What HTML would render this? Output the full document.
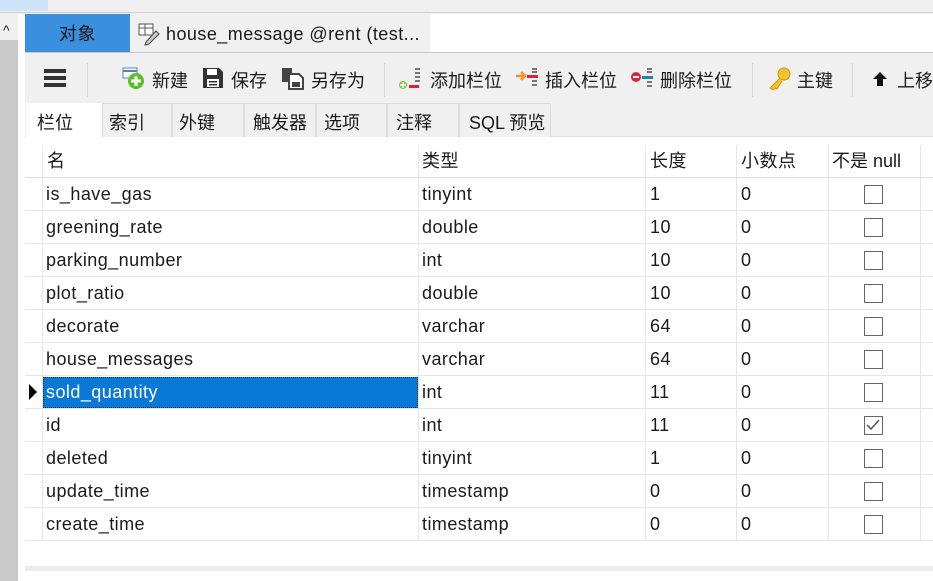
<!DOCTYPE html>
<html><head><meta charset="utf-8"><style>
*{margin:0;padding:0;box-sizing:border-box}
body{width:933px;height:581px;overflow:hidden;background:#f0f0f0;font-family:"Liberation Sans","Noto Sans CJK SC",sans-serif;font-size:18px;color:#1a1a1a;position:relative}
.a{position:absolute}
.t{position:absolute;white-space:nowrap;line-height:20px;letter-spacing:0.45px}
.tb{position:absolute;white-space:nowrap;line-height:20px;top:71px}
.cb{position:absolute;width:19px;height:19px;border:1.5px solid #666;background:#fff}
.vl{position:absolute;width:1px;background:#e6e6e6}
.hl{position:absolute;height:1px;background:#e6e6e6;left:25px;width:908px}
.st{position:absolute;top:103px;height:34px;border:1px solid #dcdcdc;border-bottom:none;background:#f0f0f0;padding:5px 0 0 6px}
</style></head><body>
<div class="a" style="left:0;top:0;width:933px;height:13px;background:#f0f0f0;border-bottom:1px solid #d0d0d0"></div>
<div class="a" style="left:0;top:0;width:48px;height:11px;background:#cde3f7"></div>
<div class="a" style="left:0;top:14px;width:18px;height:567px;background:#c9c9c9"></div>
<div class="a" style="left:0;top:14px;width:18px;height:26px;background:#f0f0f0"></div>
<div class="t" style="left:3px;top:20px;font-size:14px">^</div>
<div class="a" style="left:18px;top:14px;width:7px;height:567px;background:#fff"></div>
<div class="a" style="left:25px;top:14px;width:908px;height:39px;background:#f0f0f0"></div>
<div class="a" style="left:25px;top:14px;width:105px;height:38px;background:#3a8fde"></div>
<div class="t" style="left:59px;top:24px">对象</div>
<div class="a" style="left:430px;top:14px;width:503px;height:38px;background:#fff"></div>
<div class="a" style="left:25px;top:52px;width:908px;height:1px;background:#c8c8c8"></div>
<svg class="a" style="left:138px;top:22px" width="24" height="24" viewBox="0 0 24 24"><rect x="1" y="2" width="14" height="11" fill="#fff" stroke="#555"/><line x1="1" y1="6" x2="15" y2="6" stroke="#555"/><line x1="7" y1="2" x2="7" y2="13" stroke="#555"/><path d="M8 20 L18 9 L21 12 L11 22 L7 23 Z" fill="#ccc" stroke="#444"/></svg>
<div class="t" style="left:166px;top:24px">house_message @rent (test...</div>
<div class="a" style="left:44px;top:69px;width:22px;height:4px;background:#333"></div>
<div class="a" style="left:44px;top:76px;width:22px;height:4px;background:#333"></div>
<div class="a" style="left:44px;top:83px;width:22px;height:4px;background:#333"></div>
<div class="a" style="left:87px;top:63px;width:1px;height:34px;background:#d8d8d8"></div>
<svg class="a" style="left:122px;top:67px" width="26" height="24"><rect x="1" y="1" width="14" height="10" fill="#fff" stroke="#5a7fb0"/><line x1="1" y1="4" x2="15" y2="4" stroke="#5a7fb0" stroke-width="2"/><circle cx="14" cy="14" r="8" fill="#5cbf2a"/><path d="M14 9v10M9 14h10" stroke="#fff" stroke-width="3"/></svg>
<div class="tb" style="left:152px">新建</div>
<svg class="a" style="left:202px;top:67px" width="22" height="22"><path d="M1 1h16l4 4v16H1z" fill="#333"/><rect x="5" y="2" width="10" height="6" fill="#fff"/><rect x="5" y="12" width="12" height="8" fill="#fff"/><rect x="7" y="14" width="8" height="1.5" fill="#333"/><rect x="7" y="17" width="8" height="1.5" fill="#333"/></svg>
<div class="tb" style="left:231px">保存</div>
<svg class="a" style="left:281px;top:66px" width="24" height="24"><path d="M1 2h10v14H1z" fill="#444"/><path d="M8 8h10l4 4v11H8z" fill="#fff" stroke="#444" stroke-width="2"/><rect x="11" y="16" width="8" height="5" fill="#444"/></svg>
<div class="tb" style="left:311px">另存为</div>
<div class="a" style="left:384px;top:63px;width:1px;height:34px;background:#d8d8d8"></div>
<svg class="a" style="left:398px;top:66px" width="28" height="24"><circle cx="5" cy="19" r="4" fill="#7ac943"/><path d="M5 16v6M2 19h6" stroke="#fff" stroke-width="1.5"/><rect x="11" y="19" width="10" height="3" fill="#e0203a"/><rect x="17" y="2" width="5" height="2" fill="#777"/><rect x="17" y="6" width="5" height="2" fill="#777"/><rect x="17" y="10" width="5" height="2" fill="#777"/><rect x="17" y="14" width="5" height="2" fill="#777"/></svg>
<div class="tb" style="left:430px">添加栏位</div>
<svg class="a" style="left:515px;top:66px" width="28" height="24"><path d="M1 10h8M6 6l4 4-4 4" stroke="#f7931e" stroke-width="2.5" fill="none"/><rect x="12" y="9" width="11" height="3" fill="#e0203a"/><rect x="17" y="2" width="5" height="2" fill="#777"/><rect x="17" y="5" width="5" height="2" fill="#777"/><rect x="17" y="14" width="5" height="2" fill="#777"/><rect x="17" y="18" width="5" height="2" fill="#777"/></svg>
<div class="tb" style="left:545px">插入栏位</div>
<svg class="a" style="left:630px;top:66px" width="28" height="24"><circle cx="6" cy="11" r="5" fill="#e0203a"/><rect x="3" y="10" width="6" height="2" fill="#fff"/><rect x="12" y="10" width="11" height="3" fill="#1a8aa0"/><rect x="17" y="2" width="5" height="2" fill="#777"/><rect x="17" y="5" width="5" height="2" fill="#777"/><rect x="17" y="15" width="5" height="2" fill="#777"/><rect x="17" y="19" width="5" height="2" fill="#777"/></svg>
<div class="tb" style="left:660px">删除栏位</div>
<div class="a" style="left:752px;top:63px;width:1px;height:34px;background:#d8d8d8"></div>
<svg class="a" style="left:767px;top:66px" width="26" height="26"><circle cx="17" cy="8" r="6" fill="#f2c230" stroke="#c9961a"/><path d="M13 12 L3 22 L6 24 L8 22 L10 23 L15 15" fill="#f2c230" stroke="#c9961a"/></svg>
<div class="tb" style="left:797px">主键</div>
<div class="a" style="left:852px;top:63px;width:1px;height:34px;background:#d8d8d8"></div>
<svg class="a" style="left:872px;top:71px" width="16" height="16"><path d="M8 1 L15 8 H11 V15 H5 V8 H1 Z" fill="#111"/></svg>
<div class="tb" style="left:897px">上移</div>
<div class="a" style="left:25px;top:136px;width:908px;height:1px;background:#dcdcdc"></div>
<div class="st" style="left:26px;width:76px;background:#fff;border-color:#fff;height:35px;padding-left:10px">栏位</div>
<div class="st" style="left:102px;width:70px">索引</div>
<div class="st" style="left:172px;width:72px">外键</div>
<div class="st" style="left:244px;width:72px;padding-left:8px">触发器</div>
<div class="st" style="left:316px;width:71px;padding-left:7px">选项</div>
<div class="st" style="left:387px;width:72px;padding-left:8px">注释</div>
<div class="st" style="left:459px;width:92px;padding-left:9px">SQL 预览</div>
<div class="a" style="left:25px;top:137px;width:908px;height:429px;background:#fff"></div>
<div class="a" style="left:25px;top:566px;width:908px;height:5px;background:#ececec"></div>
<div class="a" style="left:25px;top:571px;width:908px;height:10px;background:#fff"></div>
<div class="vl" style="left:42px;top:145px;height:396px"></div>
<div class="vl" style="left:418px;top:145px;height:396px"></div>
<div class="vl" style="left:645px;top:145px;height:396px"></div>
<div class="vl" style="left:736px;top:145px;height:396px"></div>
<div class="vl" style="left:828px;top:145px;height:396px"></div>
<div class="vl" style="left:920px;top:145px;height:396px"></div>
<div class="t" style="left:47px;top:151px">名</div>
<div class="t" style="left:422px;top:151px">类型</div>
<div class="t" style="left:650px;top:151px">长度</div>
<div class="t" style="left:741px;top:151px">小数点</div>
<div class="t" style="left:832px;top:151px;letter-spacing:0">不是 null</div>
<div class="hl" style="top:177px;background:#ddd"></div>
<div class="hl" style="top:210px"></div><div class="hl" style="top:243px"></div><div class="hl" style="top:276px"></div><div class="hl" style="top:309px"></div><div class="hl" style="top:342px"></div><div class="hl" style="top:375px"></div><div class="hl" style="top:408px"></div><div class="hl" style="top:441px"></div><div class="hl" style="top:474px"></div><div class="hl" style="top:507px"></div><div class="hl" style="top:540px"></div>
<div class="a" style="left:43px;top:377px;width:375px;height:31px;background:#0a78d7;border:1px dotted #333"></div>
<svg class="a" style="left:29px;top:384px" width="9" height="16"><path d="M0 0 L8 8 L0 16Z" fill="#000"/></svg>
<div class="t" style="left:46px;top:184px">is_have_gas</div><div class="t" style="left:422px;top:184px">tinyint</div><div class="t" style="left:650px;top:184px">1</div><div class="t" style="left:741px;top:184px">0</div><div class="cb" style="left:864px;top:185px"></div>
<div class="t" style="left:46px;top:217px">greening_rate</div><div class="t" style="left:422px;top:217px">double</div><div class="t" style="left:650px;top:217px">10</div><div class="t" style="left:741px;top:217px">0</div><div class="cb" style="left:864px;top:218px"></div>
<div class="t" style="left:46px;top:250px">parking_number</div><div class="t" style="left:422px;top:250px">int</div><div class="t" style="left:650px;top:250px">10</div><div class="t" style="left:741px;top:250px">0</div><div class="cb" style="left:864px;top:251px"></div>
<div class="t" style="left:46px;top:283px">plot_ratio</div><div class="t" style="left:422px;top:283px">double</div><div class="t" style="left:650px;top:283px">10</div><div class="t" style="left:741px;top:283px">0</div><div class="cb" style="left:864px;top:284px"></div>
<div class="t" style="left:46px;top:316px">decorate</div><div class="t" style="left:422px;top:316px">varchar</div><div class="t" style="left:650px;top:316px">64</div><div class="t" style="left:741px;top:316px">0</div><div class="cb" style="left:864px;top:317px"></div>
<div class="t" style="left:46px;top:349px">house_messages</div><div class="t" style="left:422px;top:349px">varchar</div><div class="t" style="left:650px;top:349px">64</div><div class="t" style="left:741px;top:349px">0</div><div class="cb" style="left:864px;top:350px"></div>
<div class="t" style="left:46px;top:382px;color:#fff">sold_quantity</div><div class="t" style="left:422px;top:382px">int</div><div class="t" style="left:650px;top:382px">11</div><div class="t" style="left:741px;top:382px">0</div><div class="cb" style="left:864px;top:383px"></div>
<div class="t" style="left:46px;top:415px">id</div><div class="t" style="left:422px;top:415px">int</div><div class="t" style="left:650px;top:415px">11</div><div class="t" style="left:741px;top:415px">0</div><div class="cb" style="left:864px;top:416px"><svg width="16" height="16" style="position:absolute;left:0;top:0"><path d="M2 8 L6 12 L14 3" stroke="#555" stroke-width="1.5" fill="none"/></svg></div>
<div class="t" style="left:46px;top:448px">deleted</div><div class="t" style="left:422px;top:448px">tinyint</div><div class="t" style="left:650px;top:448px">1</div><div class="t" style="left:741px;top:448px">0</div><div class="cb" style="left:864px;top:449px"></div>
<div class="t" style="left:46px;top:481px">update_time</div><div class="t" style="left:422px;top:481px">timestamp</div><div class="t" style="left:650px;top:481px">0</div><div class="t" style="left:741px;top:481px">0</div><div class="cb" style="left:864px;top:482px"></div>
<div class="t" style="left:46px;top:514px">create_time</div><div class="t" style="left:422px;top:514px">timestamp</div><div class="t" style="left:650px;top:514px">0</div><div class="t" style="left:741px;top:514px">0</div><div class="cb" style="left:864px;top:515px"></div>
</body></html>
